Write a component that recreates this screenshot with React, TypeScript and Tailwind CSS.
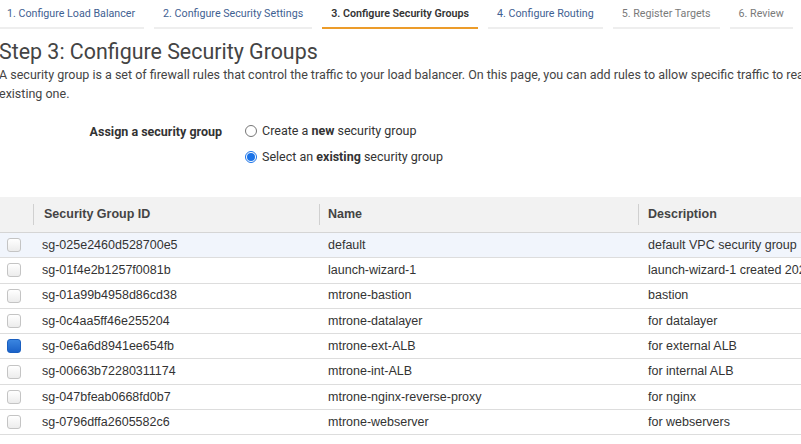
import React from 'react';

const tabs = [
  { label: '1. Configure Load Balancer', state: 'done' },
  { label: '2. Configure Security Settings', state: 'done' },
  { label: '3. Configure Security Groups', state: 'active' },
  { label: '4. Configure Routing', state: 'done' },
  { label: '5. Register Targets', state: 'todo' },
  { label: '6. Review', state: 'todo' },
];

const groups = [
  { id: 'sg-025e2460d528700e5', name: 'default', desc: 'default VPC security group' },
  { id: 'sg-01f4e2b1257f0081b', name: 'launch-wizard-1', desc: 'launch-wizard-1 created 2020-01-22T10:14:05.031+09:00' },
  { id: 'sg-01a99b4958d86cd38', name: 'mtrone-bastion', desc: 'bastion' },
  { id: 'sg-0c4aa5ff46e255204', name: 'mtrone-datalayer', desc: 'for datalayer' },
  { id: 'sg-0e6a6d8941ee654fb', name: 'mtrone-ext-ALB', desc: 'for external ALB' },
  { id: 'sg-00663b72280311174', name: 'mtrone-int-ALB', desc: 'for internal ALB' },
  { id: 'sg-047bfeab0668fd0b7', name: 'mtrone-nginx-reverse-proxy', desc: 'for nginx' },
  { id: 'sg-0796dffa2605582c6', name: 'mtrone-webserver', desc: 'for webservers' },
];

function Radio({ checked }: { checked?: boolean }) {
  if (checked) {
    return (
      <span className="flex h-[12px] w-[12px] items-center justify-center rounded-full border border-[#1a73e8] bg-white">
        <span className="h-[8px] w-[8px] rounded-full bg-[#1a73e8]" />
      </span>
    );
  }
  return <span className="h-[12px] w-[12px] rounded-full border border-[#767676] bg-white" />;
}

function Check({ checked }: { checked?: boolean }) {
  if (checked) {
    return <span className="block h-[14px] w-[14px] rounded-[3px] border border-[#1a5fc0] bg-gradient-to-b from-[#3a85e0] to-[#1b62c8]" />;
  }
  return <span className="block h-[14px] w-[14px] rounded-[3px] border border-[#c4c4c4] bg-gradient-to-b from-white to-[#ececec]" />;
}

export default function App() {
  return (
    <div className="h-[444px] w-[801px] overflow-hidden bg-white text-[#444]" style={{ fontFamily: 'Roboto, sans-serif' }}>
      <div className="ml-[-2px] flex gap-[10px] text-[10.7px]">
        {tabs.map((t) => (
          <div
            key={t.label}
            className={
              'flex h-[29px] items-center whitespace-nowrap border-b-2 px-[9px] pt-[1px] ' +
              (t.state === 'active'
                ? 'border-[#ec9c2a] font-semibold text-[#333]'
                : t.state === 'done'
                ? 'border-[#eeeeee] text-[#3f6192]'
                : 'border-[#eeeeee] text-[#7a7a7a]')
            }
          >
            {t.label}
          </div>
        ))}
      </div>

      <h1 className="mt-[9px] ml-[-1px] whitespace-nowrap text-[21.4px] leading-[28px] text-[#444]">
        Step 3: Configure Security Groups
      </h1>
      <p className="ml-[-1px] mt-[-1px] whitespace-nowrap text-[12.5px] leading-[19px] text-[#444]">
        A security group is a set of firewall rules that control the traffic to your load balancer. On this page, you can add rules to allow specific traffic to reach your load balancer. First, decide whether to create a new security group or select an
        <br />
        existing one.
      </p>

      <div className="mt-[19px] flex text-[12.5px]">
        <div className="w-[222px] pt-[1px] text-right font-bold text-[#333]">Assign a security group</div>
        <div className="ml-[23px] flex flex-col gap-[8px] text-[#333]">
          <label className="flex h-[18px] items-center gap-[5px]">
            <Radio />
            <span>
              Create a <b>new</b> security group
            </span>
          </label>
          <label className="flex h-[18px] items-center gap-[5px]">
            <Radio checked />
            <span>
              Select an <b>existing</b> security group
            </span>
          </label>
        </div>
      </div>

      <div className="mt-[31px] w-[1100px] text-[12.5px] text-[#333]" style={{ fontFamily: '"Liberation Sans", Arial, sans-serif' }}>
        <div className="grid h-[36px] grid-cols-[33px_286px_319px_1fr] items-center border-b border-[#d5d5d5] bg-[#f2f2f2] font-bold text-[#444]">
          <div />
          <div className="flex h-[21px] items-center border-l border-[#d0d0d0] pl-[10px]">Security Group ID</div>
          <div className="flex h-[21px] items-center border-l border-[#d0d0d0] pl-[8px]">Name</div>
          <div className="flex h-[21px] items-center border-l border-[#d0d0d0] pl-[9px]">Description</div>
        </div>
        {groups.map((g, i) => (
          <div
            key={g.id}
            className={
              'grid h-[25.3px] grid-cols-[33px_286px_319px_1fr] items-center border-b border-[#dddddd] ' +
              (i === 0 ? 'bg-[#f1f5fc]' : 'bg-white')
            }
          >
            <div className="pl-[7px]">
              <Check checked={i === 4} />
            </div>
            <div className="pl-[9px]">{g.id}</div>
            <div className="pl-[9px]">{g.name}</div>
            <div className="whitespace-nowrap pl-[10px]">{g.desc}</div>
          </div>
        ))}
      </div>
    </div>
  );
}
